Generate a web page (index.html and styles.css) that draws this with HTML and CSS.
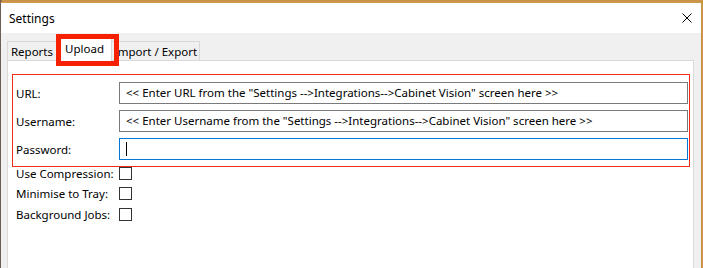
FILE: index.html
```html
<!DOCTYPE html>
<html lang="en">
<head>
  <meta charset="UTF-8" />
  <title>Settings</title>
  <link rel="stylesheet" href="styles.css">
</head>
<body>

<div class="window">
  <!-- Title bar -->
  <div class="titlebar">
    <span class="title">Settings</span>
    <svg class="close" width="10" height="10" viewBox="0 0 10 10">
      <path d="M0.5 0.5 L9.5 9.5 M9.5 0.5 L0.5 9.5" stroke="#000" stroke-width="1" fill="none"/>
    </svg>
  </div>

  <div class="client">
    <!-- Tabs -->
    <div class="tabs">
      <div class="tab tab-reports">Reports</div>
      <div class="tab tab-upload active">Upload<span class="mark"></span></div>
      <div class="tab tab-import">Import / Export</div>
    </div>

    <div class="panel">
      <div class="creds">
        <label class="lbl">URL:</label>
        <div class="field">&lt;&lt; Enter URL from the "Settings --&gt;Integrations--&gt;Cabinet Vision" screen here &gt;&gt;</div>

        <label class="lbl">Username:</label>
        <div class="field">&lt;&lt; Enter Username from the "Settings --&gt;Integrations--&gt;Cabinet Vision" screen here &gt;&gt;</div>

        <label class="lbl">Password:</label>
        <div class="field focus"><span class="caret"></span></div>
      </div>

      <div class="checks">
        <label class="lbl">Use Compression:</label>
        <span class="box"></span>
        <label class="lbl">Minimise to Tray:</label>
        <span class="box"></span>
        <label class="lbl">Background Jobs:</label>
        <span class="box"></span>
      </div>
    </div>
  </div>
</div>

</body>
</html>
```

FILE: styles.css
```css
* { margin: 0; padding: 0; box-sizing: border-box; }

html, body {
  height: 100%;
  overflow: hidden;
}

body {
  font-family: 'Noto Sans', 'Open Sans', sans-serif;
  font-size: 11.5px;
  color: #000;
  background: linear-gradient(90deg, #6b5a50 0px, #6b5a50 1px, #c99449 2px, #c99449 100%);
}

.window {
  margin-top: 2px;
  width: 702px;
  height: 266px;
  background: #f0f0f0;
  border-top: 1px solid #d09a48;
  border-left: 1px solid #6d5d52;
  border-right: 1px solid #c9953f;
  display: flex;
  flex-direction: column;
}

.titlebar {
  height: 30px;
  background: #fff;
  display: flex;
  align-items: center;
  justify-content: space-between;
  padding: 0 9px 0 8px;
}

.title { font-size: 12px; }

.close { display: block; }

.client {
  flex: 1;
  padding: 8px 7px 0 6px;
  display: flex;
  flex-direction: column;
}

/* Tabs */
.tabs {
  display: flex;
  align-items: flex-end;
  height: 19px;
  position: relative;
  z-index: 2;
}

.tab {
  height: 19px;
  line-height: 18px;
  border: 1px solid #d9d9d9;
  border-bottom: none;
  background: #f0f0f0;
  text-align: center;
  white-space: nowrap;
}

.tab-reports { width: 50px; padding-top: 1px; }
.tab-upload { width: 55px; }
.tab-import { width: 88px; padding-top: 1px; border-left: none; }

.tab.active {
  height: 23px;
  line-height: 19px;
  background: #fff;
  position: relative;
  margin-bottom: -1px;
  padding-top: 0;
}

.mark {
  position: absolute;
  left: -2px;
  top: -5px;
  width: 63px;
  height: 32px;
  border: 5px solid #f52100;
}

/* Panel */
.panel {
  flex: 1;
  background: #fff;
  border: 1px solid #d9d9d9;
  border-bottom: none;
  padding: 13px 3px 0 4px;
}

.creds {
  border: 1px solid #ee2e16;
  padding: 7px 1px 6px 3px;
  display: grid;
  grid-template-columns: 103px 1fr;
  row-gap: 6px;
  align-items: center;
}

.lbl { white-space: nowrap; }

.field {
  height: 22px;
  line-height: 20px;
  border: 1px solid #7a7a7a;
  padding: 0 6px;
  white-space: nowrap;
  overflow: hidden;
}

.field.focus {
  border-color: #0078d7;
  display: flex;
  align-items: center;
}

.caret {
  display: block;
  width: 1px;
  height: 14px;
  background: #000;
}

.checks {
  margin-top: -4px;
  padding-left: 4px;
  display: grid;
  grid-template-columns: 103px 13px;
  grid-auto-rows: 20.5px;
  align-items: center;
}

.box {
  width: 13px;
  height: 13px;
  border: 1px solid #333;
  background: #fff;
}
```
